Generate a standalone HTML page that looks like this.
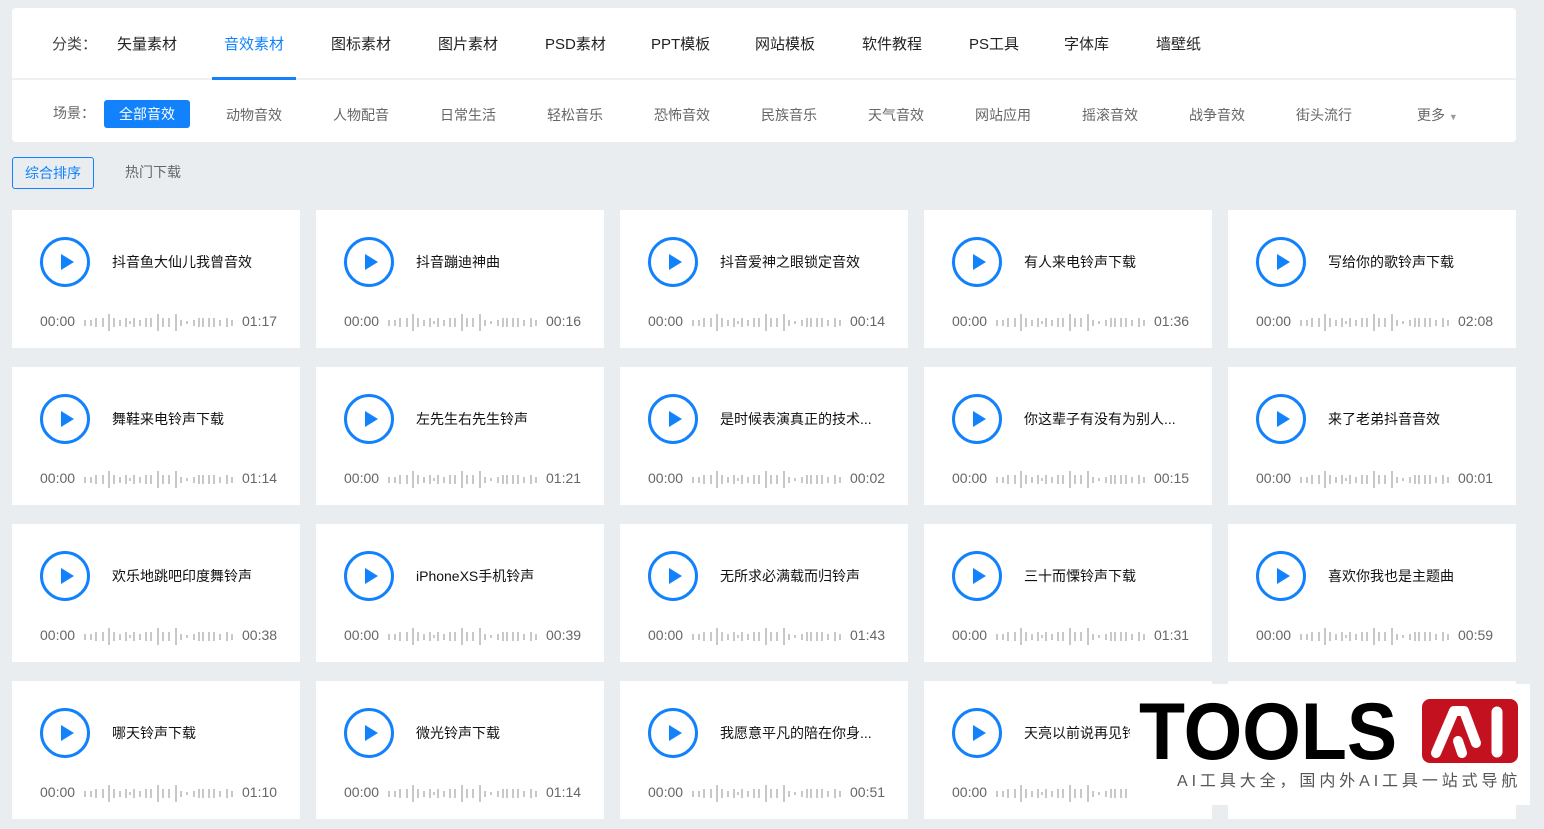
<!DOCTYPE html>
<html><head><meta charset="utf-8">
<style>
*{margin:0;padding:0;box-sizing:border-box}
body{width:1544px;height:829px;background:#eaedf0;position:relative;overflow:hidden;font-family:"Liberation Sans","Noto Sans CJK SC",sans-serif}
.panel{position:absolute;left:12px;top:8px;width:1504px;height:134px;background:#fff;border-radius:4px}
.div{position:absolute;left:12px;top:78px;width:1504px;height:2px;background:#eef0f3}
.t{position:absolute;white-space:nowrap;line-height:1}
.nav{font-size:15px;color:#222;top:37px}
.sc{font-size:14px;color:#666;top:108px}
.ul{position:absolute;left:212px;top:77px;width:84px;height:3px;background:#1182fb}
.btn{position:absolute;left:104px;top:100px;width:86px;height:28px;background:#1182fb;border-radius:3px;color:#fff;font-size:14px;line-height:28px;text-align:center}
.sort{position:absolute;left:12px;top:157px;width:82px;height:32px;border:1px solid #1182fb;border-radius:3px;color:#1182fb;font-size:14px;line-height:30px;text-align:center}
.card{position:absolute;width:288px;height:138px;background:#fff}
.card svg.p{position:absolute;left:27px;top:26px}
.card .ti{position:absolute;left:100px;top:45px;font-size:14px;color:#111;white-space:nowrap;line-height:1}
.card .a{position:absolute;left:28px;top:104px;font-size:14px;color:#666;line-height:1}
.card .b{position:absolute;left:230px;top:104px;font-size:14px;color:#666;line-height:1}
.card svg.w{position:absolute;left:68px;top:102px}
</style></head><body>
<div class="panel"></div>
<div class="div"></div>
<div class="t nav" style="left:52px;color:#444">分类：</div>
<div class="t nav" style="left:117px">矢量素材</div>
<div class="t nav" style="left:224px;color:#1182fb">音效素材</div>
<div class="t nav" style="left:331px">图标素材</div>
<div class="t nav" style="left:438px">图片素材</div>
<div class="t nav" style="left:545px">PSD素材</div>
<div class="t nav" style="left:651px">PPT模板</div>
<div class="t nav" style="left:755px">网站模板</div>
<div class="t nav" style="left:862px">软件教程</div>
<div class="t nav" style="left:969px">PS工具</div>
<div class="t nav" style="left:1064px">字体库</div>
<div class="t nav" style="left:1156px">墙壁纸</div>
<div class="ul"></div>
<div class="t sc" style="left:53px;top:106px">场景：</div>
<div class="btn">全部音效</div>
<div class="t sc" style="left:226px">动物音效</div>
<div class="t sc" style="left:333px">人物配音</div>
<div class="t sc" style="left:440px">日常生活</div>
<div class="t sc" style="left:547px">轻松音乐</div>
<div class="t sc" style="left:654px">恐怖音效</div>
<div class="t sc" style="left:761px">民族音乐</div>
<div class="t sc" style="left:868px">天气音效</div>
<div class="t sc" style="left:975px">网站应用</div>
<div class="t sc" style="left:1082px">摇滚音效</div>
<div class="t sc" style="left:1189px">战争音效</div>
<div class="t sc" style="left:1296px">街头流行</div>
<div class="t sc" style="left:1417px">更多 <span style="font-size:9px;color:#999">▼</span></div>
<div class="sort">综合排序</div>
<div class="t" style="left:125px;top:165px;font-size:14px;color:#666">热门下载</div>

<svg width="0" height="0" style="position:absolute">
<defs>
<g id="pl"><circle cx="26" cy="26" r="23.5" fill="none" stroke="#1182fb" stroke-width="3"/><path d="M22 18 L35 26 L22 34 Z" fill="#1182fb"/></g>
<g id="wv" fill="#c8c8c8">
<rect x="4" y="8" width="2" height="6"/><rect x="10" y="8" width="2" height="6"/><rect x="15" y="6" width="2" height="9"/><rect x="22" y="6" width="2" height="9"/><rect x="28" y="2" width="2" height="17"/><rect x="33" y="6" width="2" height="9"/><rect x="39" y="8" width="2" height="6"/><rect x="45" y="6" width="2" height="9"/><rect x="49" y="9" width="2" height="3"/><rect x="53" y="6" width="2" height="9"/><rect x="59" y="8" width="2" height="6"/><rect x="65" y="6" width="2" height="9"/><rect x="70" y="6" width="2" height="9"/><rect x="77" y="2" width="2" height="17"/><rect x="82" y="6" width="2" height="9"/><rect x="88" y="6" width="2" height="9"/><rect x="95" y="2" width="2" height="17"/><rect x="100" y="8" width="2" height="6"/><rect x="106" y="9" width="2" height="3"/><rect x="113" y="8" width="2" height="6"/><rect x="118" y="6" width="2" height="9"/><rect x="122" y="6" width="2" height="9"/><rect x="128" y="6" width="2" height="9"/><rect x="133" y="6" width="2" height="9"/><rect x="139" y="8" width="2" height="6"/><rect x="146" y="6" width="2" height="9"/><rect x="151" y="8" width="2" height="6"/>
</g></defs></svg>

<div class="card" style="left:12px;top:210px"><svg class="p" width="52" height="52"><use href="#pl"/></svg><div class="ti">抖音鱼大仙儿我曾音效</div><div class="a">00:00</div><svg class="w" width="160" height="22"><use href="#wv"/></svg><div class="b">01:17</div></div>
<div class="card" style="left:316px;top:210px"><svg class="p" width="52" height="52"><use href="#pl"/></svg><div class="ti">抖音蹦迪神曲</div><div class="a">00:00</div><svg class="w" width="160" height="22"><use href="#wv"/></svg><div class="b">00:16</div></div>
<div class="card" style="left:620px;top:210px"><svg class="p" width="52" height="52"><use href="#pl"/></svg><div class="ti">抖音爱神之眼锁定音效</div><div class="a">00:00</div><svg class="w" width="160" height="22"><use href="#wv"/></svg><div class="b">00:14</div></div>
<div class="card" style="left:924px;top:210px"><svg class="p" width="52" height="52"><use href="#pl"/></svg><div class="ti">有人来电铃声下载</div><div class="a">00:00</div><svg class="w" width="160" height="22"><use href="#wv"/></svg><div class="b">01:36</div></div>
<div class="card" style="left:1228px;top:210px"><svg class="p" width="52" height="52"><use href="#pl"/></svg><div class="ti">写给你的歌铃声下载</div><div class="a">00:00</div><svg class="w" width="160" height="22"><use href="#wv"/></svg><div class="b">02:08</div></div>

<div class="card" style="left:12px;top:367px"><svg class="p" width="52" height="52"><use href="#pl"/></svg><div class="ti">舞鞋来电铃声下载</div><div class="a">00:00</div><svg class="w" width="160" height="22"><use href="#wv"/></svg><div class="b">01:14</div></div>
<div class="card" style="left:316px;top:367px"><svg class="p" width="52" height="52"><use href="#pl"/></svg><div class="ti">左先生右先生铃声</div><div class="a">00:00</div><svg class="w" width="160" height="22"><use href="#wv"/></svg><div class="b">01:21</div></div>
<div class="card" style="left:620px;top:367px"><svg class="p" width="52" height="52"><use href="#pl"/></svg><div class="ti">是时候表演真正的技术...</div><div class="a">00:00</div><svg class="w" width="160" height="22"><use href="#wv"/></svg><div class="b">00:02</div></div>
<div class="card" style="left:924px;top:367px"><svg class="p" width="52" height="52"><use href="#pl"/></svg><div class="ti">你这辈子有没有为别人...</div><div class="a">00:00</div><svg class="w" width="160" height="22"><use href="#wv"/></svg><div class="b">00:15</div></div>
<div class="card" style="left:1228px;top:367px"><svg class="p" width="52" height="52"><use href="#pl"/></svg><div class="ti">来了老弟抖音音效</div><div class="a">00:00</div><svg class="w" width="160" height="22"><use href="#wv"/></svg><div class="b">00:01</div></div>

<div class="card" style="left:12px;top:524px"><svg class="p" width="52" height="52"><use href="#pl"/></svg><div class="ti">欢乐地跳吧印度舞铃声</div><div class="a">00:00</div><svg class="w" width="160" height="22"><use href="#wv"/></svg><div class="b">00:38</div></div>
<div class="card" style="left:316px;top:524px"><svg class="p" width="52" height="52"><use href="#pl"/></svg><div class="ti">iPhoneXS手机铃声</div><div class="a">00:00</div><svg class="w" width="160" height="22"><use href="#wv"/></svg><div class="b">00:39</div></div>
<div class="card" style="left:620px;top:524px"><svg class="p" width="52" height="52"><use href="#pl"/></svg><div class="ti">无所求必满载而归铃声</div><div class="a">00:00</div><svg class="w" width="160" height="22"><use href="#wv"/></svg><div class="b">01:43</div></div>
<div class="card" style="left:924px;top:524px"><svg class="p" width="52" height="52"><use href="#pl"/></svg><div class="ti">三十而慄铃声下载</div><div class="a">00:00</div><svg class="w" width="160" height="22"><use href="#wv"/></svg><div class="b">01:31</div></div>
<div class="card" style="left:1228px;top:524px"><svg class="p" width="52" height="52"><use href="#pl"/></svg><div class="ti">喜欢你我也是主题曲</div><div class="a">00:00</div><svg class="w" width="160" height="22"><use href="#wv"/></svg><div class="b">00:59</div></div>

<div class="card" style="left:12px;top:681px"><svg class="p" width="52" height="52"><use href="#pl"/></svg><div class="ti">哪天铃声下载</div><div class="a">00:00</div><svg class="w" width="160" height="22"><use href="#wv"/></svg><div class="b">01:10</div></div>
<div class="card" style="left:316px;top:681px"><svg class="p" width="52" height="52"><use href="#pl"/></svg><div class="ti">微光铃声下载</div><div class="a">00:00</div><svg class="w" width="160" height="22"><use href="#wv"/></svg><div class="b">01:14</div></div>
<div class="card" style="left:620px;top:681px"><svg class="p" width="52" height="52"><use href="#pl"/></svg><div class="ti">我愿意平凡的陪在你身...</div><div class="a">00:00</div><svg class="w" width="160" height="22"><use href="#wv"/></svg><div class="b">00:51</div></div>
<div class="card" style="left:924px;top:681px"><svg class="p" width="52" height="52"><use href="#pl"/></svg><div class="ti">天亮以前说再见铃声</div><div class="a">00:00</div><svg class="w" width="160" height="22"><use href="#wv"/></svg><div class="b">01:22</div></div>
<div class="card" style="left:1228px;top:681px"></div>

<div style="position:absolute;left:1130px;top:684px;width:400px;height:121px;background:#fff"></div>
<div class="t" style="left:1139px;top:692px;font-size:81px;font-weight:bold;color:#000;letter-spacing:0;line-height:1;transform:scaleX(0.93);transform-origin:left">TOOLS</div>
<div style="position:absolute;left:1422px;top:699px;width:96px;height:64px;background:#c3111f;border-radius:8px"></div>
<svg style="position:absolute;left:1422px;top:699px" width="96" height="64"><path d="M14 54 L32 12 L42 12 L54 44 M40 54 L36 42" stroke="#fff" stroke-width="10" fill="none" stroke-linecap="round" stroke-linejoin="round"/><path d="M75 13 L75 53" stroke="#fff" stroke-width="11" stroke-linecap="round"/></svg>
<div class="t" style="left:1177px;top:774px;font-size:16px;color:#555;letter-spacing:3.9px">AI工具大全，国内外AI工具一站式导航</div>
</body></html>
